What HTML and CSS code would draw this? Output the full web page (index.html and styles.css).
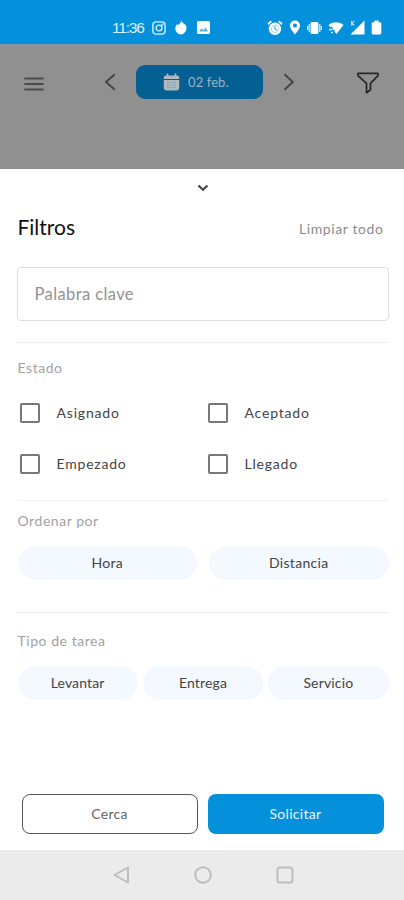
FILE: index.html
```
<!DOCTYPE html>
<html lang="es">
<head>
<meta charset="utf-8">
<title>Filtros</title>
<link rel="stylesheet" href="styles.css">
</head>
<body>
<div class="screen">
  <header class="status">
    <div class="status-left">
      <span class="clock">11:36</span>
      <svg class="insta" width="14" height="14" viewBox="0 0 14 14" fill="none" stroke="#d8f0ff" stroke-width="1.4"><rect x=".9" y=".9" width="12.2" height="12.2" rx="3.3"/><circle cx="7" cy="7" r="2.9"/><circle cx="10.4" cy="3.6" r=".4"/></svg>
      <svg class="flame" width="12" height="15" viewBox="0 0 12 15" fill="#fff"><path d="M6.300 0c.3 2 1.200 3 2.500 3.600C10.700 4.800 11.800 6.500 11.500 8.600c-.3 3-2.600 5.900-5.500 5.900S.5 11.800.3 8.800C.2 7 .9 5.300 2.300 4.300l1 .6C4.800 3.600 6.200 2.200 6.300 0z"/></svg>
      <svg width="13" height="13" viewBox="0 0 13 13"><rect width="13" height="13" rx="1.500" fill="#fff"/><path d="M2 10.500l2.500-3.200 1.800 2 2.200-2.800 2.700 4z" fill="#5ab2df"/></svg>
    </div>
    <div class="status-right">
      <svg width="16" height="16" viewBox="0 0 16 16"><circle cx="8" cy="8.800" r="6.200" fill="#fff"/><path d="M1 4.200L4.300 1.300M15 4.200L11.700 1.300" stroke="#fff" stroke-width="1.800"/><circle cx="8" cy="8.800" r="3.700" fill="none" stroke="#8ccbee" stroke-width=".8"/><path d="M8 6v3l2 1.200" fill="none" stroke="#4aaee4" stroke-width="1.200"/></svg>
      <svg width="12" height="15" viewBox="0 0 12 15"><path fill="#fff" fill-rule="evenodd" d="M6 .5a5 5 0 0 0-5 5C1 9 6 14.500 6 14.500S11 9 11 5.500a5 5 0 0 0-5-5zm0 3.100a2 2 0 1 1 0 4 2 2 0 0 1 0-4z"/></svg>
      <svg width="15" height="14" viewBox="0 0 15 14"><rect x="3.600" y="1" width="7.800" height="12" rx="1" fill="#fff"/><path d="M2.200 3v8M12.800 3v8M.6 5v4M14.400 5v4" stroke="#e0f3ff" stroke-width="1.200"/></svg>
      <svg width="16" height="14" viewBox="0 0 16 14"><path d="M.5 4C4.800.4 11.200.4 15.500 4L8.500 13z" fill="#fff"/><path d="M.5 7.500h4M2.500 10.500h4" stroke="#0590dc" stroke-width="3"/><path d="M1 8.500h3M3 11.500h2" stroke="#d8f0ff" stroke-width="1.500"/></svg>
      <svg width="15" height="15" viewBox="0 0 15 15"><path d="M14.500.5v14H.5z" fill="#fff"/><path d="M1.500 1v4.500M4.200 1L2 3.200l2.200 2.300" stroke="#b8e2fa" stroke-width="1.100" fill="none"/></svg>
      <svg width="11" height="15" viewBox="0 0 11 15"><path d="M3.500.5h4v1.700h1.500a1.300 1.300 0 0 1 1.300 1.300v9.700a1.300 1.300 0 0 1-1.300 1.300H2A1.300 1.300 0 0 1 .7 13.200V3.500A1.300 1.300 0 0 1 2 2.200h1.500z" fill="#fff"/></svg>
    </div>
  </header>
  <div class="topbar">
    <svg class="menu" width="20" height="16" viewBox="0 0 20 16" stroke="#4c4c4c" stroke-width="1.800" stroke-linecap="round"><path d="M1 2.500h18M1 8h18M1 13.500h18"/></svg>
    <div class="picker">
      <svg width="12" height="18" viewBox="0 0 12 18" fill="none" stroke="#454545" stroke-width="1.900"><path d="M10.800 1.200L2 9l8.800 7.800"/></svg>
      <div class="date">
        <svg width="17" height="18" viewBox="0 0 17 18"><path d="M4.500.5v3M12.500.5v3" stroke="#aeb9c0" stroke-width="1.600"/><path d="M.8 6V4.500a2 2 0 0 1 2-2h11.400a2 2 0 0 1 2 2V6zM.8 7h15.400v7.500a3 3 0 0 1-3 3H3.800a3 3 0 0 1-3-3z" fill="#aeb9c0"/><path d="M4 9.500h9M4 12h9M4 14.500h9" stroke="#7c9bad" stroke-width="1.100" stroke-dasharray="1.500 1"/></svg>
        <span>02 feb.</span>
      </div>
      <svg width="12" height="18" viewBox="0 0 12 18" fill="none" stroke="#454545" stroke-width="1.900"><path d="M1.500 1.200L9.800 9l-8.300 7.800"/></svg>
    </div>
    <svg class="funnel" width="22" height="22" viewBox="0 0 22 22" fill="none" stroke="#252525" stroke-width="1.700" stroke-linejoin="round"><path d="M1 1.300h20v2.400l-7.500 7.600v6.400l-4 3v-9.400L1 3.700z"/></svg>
  </div>
  <main class="sheet">
    <div class="grip"><svg width="12" height="8" viewBox="0 0 12 8" fill="none" stroke="#444" stroke-width="2.200"><path d="M1.500 1.500L6 5.700l4.500-4.200"/></svg></div>
    <div class="heading"><h1>Filtros</h1><span class="clear">Limpiar todo</span></div>
    <div class="field">Palabra clave</div>
    <section class="state">
      <h2>Estado</h2>
      <div class="checks">
        <div class="check"><i></i><span>Asignado</span></div>
        <div class="check"><i></i><span>Aceptado</span></div>
        <div class="check"><i></i><span>Empezado</span></div>
        <div class="check"><i></i><span>Llegado</span></div>
      </div>
    </section>
    <section class="order">
      <h2>Ordenar por</h2>
      <div class="pills two"><span>Hora</span><span>Distancia</span></div>
    </section>
    <section class="type">
      <h2>Tipo de tarea</h2>
      <div class="pills three"><span>Levantar</span><span>Entrega</span><span>Servicio</span></div>
    </section>
    <div class="actions"><div class="btn outline">Cerca</div><div class="btn solid">Solicitar</div></div>
  </main>
  <nav class="nav">
    <svg width="18" height="18" viewBox="0 0 18 18"><path d="M16 1.500v15L2.500 9z"/></svg>
    <svg width="18" height="18" viewBox="0 0 18 18"><circle cx="9" cy="9" r="7.800"/></svg>
    <svg width="18" height="18" viewBox="0 0 18 18"><rect x="1.500" y="1.500" width="15" height="15" rx="2.500"/></svg>
  </nav>
</div>
</body>
</html>
```
FILE: styles.css
```
* { box-sizing: border-box; }
body { margin: 0; font-family: Lato, "Open Sans", sans-serif; color: #444; }
svg { display: block; flex: none; }
h1, h2 { margin: 0; font-weight: 400; }
.screen { width: 404px; height: 900px; display: flex; flex-direction: column; overflow: hidden; background: #fff; }
.status { height: 44px; flex: none; background: #0590dc; display: flex; justify-content: space-between; padding: 12px 22px 0 112px; }
.status-left, .status-right { display: flex; align-items: center; height: 31px; }
.clock { font: 15.500px/20px "Liberation Sans", sans-serif; letter-spacing: -1.200px; color: #d8f0ff; width: 32px; white-space: nowrap; }
.insta { margin-left: 8px; }
.flame { margin: 0 10px 0 9px; }
.status-right { gap: 6px; }
.topbar { height: 125px; flex: none; background: #909090; border-top: 1px solid #849aa6; display: flex; align-items: flex-start; padding: 20px 25px 0 24px; }
.menu { margin-top: 11px; }
.funnel { margin: 7px 0 0 auto; }
.picker { display: flex; align-items: center; gap: 20px; margin-left: 60px; height: 34px; }
.date { width: 127px; height: 34px; border-radius: 9px; background: #045f93; display: flex; align-items: center; padding-left: 27px; gap: 8px; color: #9fb3c0; font-size: 13px; letter-spacing: .1px; }
.sheet { height: 681px; flex: none; padding: 0 15.500px 0 16.500px; display: flex; flex-direction: column; }
.grip { height: 36px; display: flex; justify-content: center; align-items: center; padding-top: 1px; }
.heading { height: 62px; display: flex; justify-content: space-between; align-items: flex-start; padding: 8px 5px 0 1px; }
h1 { font-size: 21px; line-height: 27px; color: #111; }
.clear { font-size: 14px; line-height: 31px; letter-spacing: .6px; color: #8c8c8c; }
.field { height: 54px; border: 1.500px solid #dedede; border-radius: 4px; padding-left: 17px; font-size: 16.500px; line-height: 52px; letter-spacing: .4px; color: #929292; }
section { border-top: 1px solid #eee; }
h2 { font-size: 14px; line-height: 20px; letter-spacing: .55px; color: #a2a2a2; padding-left: 1px; }
.state { margin-top: 21px; height: 158px; padding-top: 15px; }
.checks { display: grid; grid-template-columns: 188px 1fr; row-gap: 31px; padding: 25px 0 0 3px; }
.check { display: flex; align-items: center; height: 20px; gap: 17px; font-size: 14px; letter-spacing: .8px; }
.check span { margin-top: -1px; }
.check i { width: 20px; height: 20px; border: 2px solid #777; border-radius: 2px; }
.order { height: 112px; padding-top: 10px; border-color: #f4f4f4; }
.pills { display: grid; padding-left: 1px; }
.pills span { background: #f3f9fe; border-radius: 17px; height: 34px; line-height: 34px; text-align: center; font-size: 14px; letter-spacing: .3px; }
.two { grid-template-columns: 1fr 1fr; gap: 12px; margin-top: 15px; }
.three { grid-template-columns: repeat(3, 1fr); gap: 5px; margin-top: 15px; }
.three span { letter-spacing: .15px; }
.type { height: 110px; padding-top: 18px; }
.actions { display: grid; grid-template-columns: 176px 176px; gap: 10px; margin-top: 72px; padding-left: 5px; }
.btn { height: 40px; border-radius: 8px; text-align: center; line-height: 40px; font-size: 14px; letter-spacing: .3px; }
.outline { border: 1px solid #555; line-height: 38px; color: #666; }
.solid { background: #0590dc; color: #e4f5ff; }
.nav { height: 50px; flex: none; background: #ebebeb; display: flex; justify-content: center; align-items: center; gap: 64px; padding-left: 1px; }
.nav svg { fill: none; stroke: #bebebe; stroke-width: 2; stroke-linejoin: round; }
```
